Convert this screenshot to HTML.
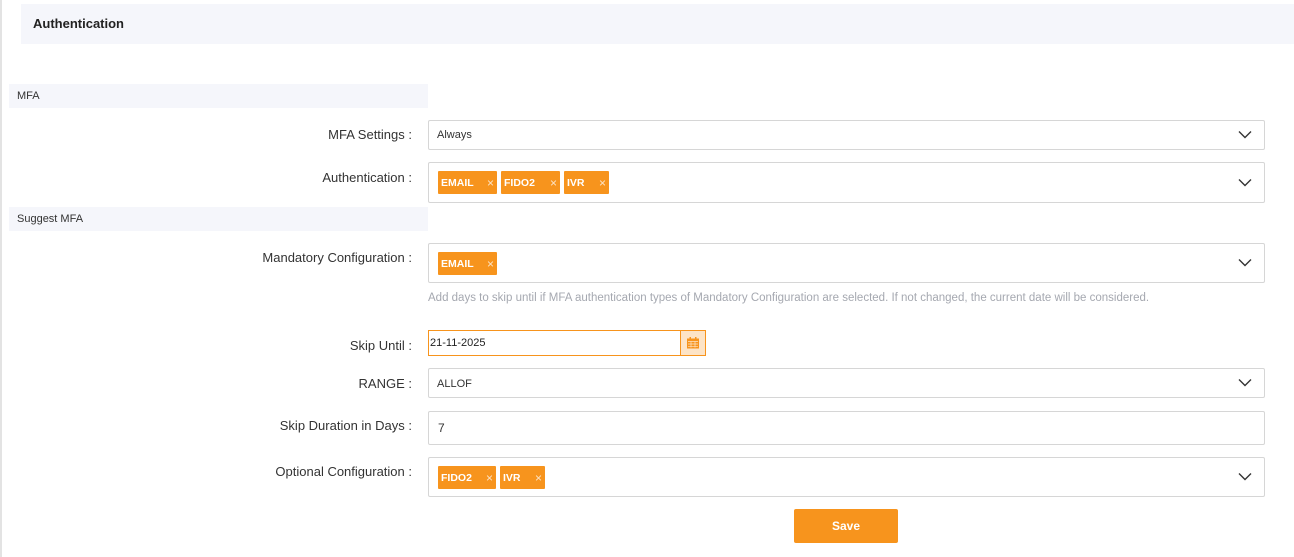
<!DOCTYPE html>
<html><head><style>
*{box-sizing:border-box;margin:0;padding:0}
body{width:1294px;height:557px;background:#fff;font-family:"Liberation Sans",Arial,sans-serif;position:relative;overflow:hidden;color:#333}
.a{position:absolute}
.lbar{left:0;top:0;width:2px;height:557px;background:#e3e3e3}
.hdr{left:21px;top:4px;width:1273px;height:40px;background:#f5f6fb;font-weight:bold;font-size:13px;color:#222;padding:12px 0 0 12px}
.sec{left:9px;width:419px;height:24px;background:#f5f6fb;font-size:11px;color:#333;padding:6px 0 0 8px}
.lbl{right:882px;font-size:13px;color:#333;text-align:right;white-space:nowrap}
.box{left:428px;width:837px;border:1px solid #d6d6d6;border-radius:2px;background:#fff;font-size:11px;color:#333}
.chev{position:absolute;right:12px;top:50%;margin-top:-5px;width:14px;height:9px}
.tag{position:absolute;top:8px;height:23px;background:#f7941d;color:#fff;font-weight:bold;font-size:10.5px;padding:6px 0 0 3px;border-radius:1px}
.tag i{position:absolute;right:3px;top:5px;font-style:normal;font-weight:normal;font-size:12px;color:#fde4c7}
</style></head><body>
<div class="a lbar"></div>
<div class="a hdr">Authentication</div>
<div class="a sec" style="top:84px">MFA</div>
<div class="a lbl" style="top:127px">MFA Settings :</div>
<div class="a box" style="top:120px;height:30px;padding:8px 0 0 8px">Always<svg class="chev" viewBox="0 0 14 9"><path d="M1 1.5L7 7.5L13 1.5" fill="none" stroke="#333" stroke-width="1.4"/></svg></div>
<div class="a lbl" style="top:170px">Authentication :</div>
<div class="a box" style="top:162px;height:41px">
<div class="tag" style="left:9px;width:59px">EMAIL<i>×</i></div>
<div class="tag" style="left:72px;width:59px">FIDO2<i>×</i></div>
<div class="tag" style="left:135px;width:45px">IVR<i>×</i></div>
<svg class="chev" viewBox="0 0 14 9"><path d="M1 1.5L7 7.5L13 1.5" fill="none" stroke="#333" stroke-width="1.4"/></svg></div>
<div class="a sec" style="top:207px">Suggest MFA</div>
<div class="a lbl" style="top:250px">Mandatory Configuration :</div>
<div class="a box" style="top:243px;height:40px">
<div class="tag" style="left:9px;width:59px">EMAIL<i>×</i></div>
<svg class="chev" viewBox="0 0 14 9"><path d="M1 1.5L7 7.5L13 1.5" fill="none" stroke="#333" stroke-width="1.4"/></svg></div>
<div class="a" style="left:428px;top:292px;font-size:11.5px;color:#a5a8b0;white-space:nowrap">Add days to skip until if MFA authentication types of Mandatory Configuration are selected. If not changed, the current date will be considered.</div>
<div class="a lbl" style="top:338px">Skip Until :</div>
<div class="a" style="left:428px;top:330px;width:278px;height:26px;border:1px solid #f7941d;font-size:11px;color:#222;padding:6px 0 0 1px">21-11-2025
<div style="position:absolute;right:0;top:0;width:25px;height:24px;background:#fde4c7;border-left:1px solid #f7941d">
<svg style="position:absolute;left:6px;top:6px" width="12" height="12" viewBox="0 0 12 12"><rect x="0" y="1.5" width="12" height="10" fill="#f7941d"/><rect x="2.5" y="0" width="1.5" height="3" fill="#f7941d"/><rect x="8" y="0" width="1.5" height="3" fill="#f7941d"/><path d="M1 4.5h10M1 7h10M1 9.3h10M4 4.5v6M8 4.5v6" stroke="#fde4c7" stroke-width=".7"/></svg></div></div>
<div class="a lbl" style="top:376px">RANGE :</div>
<div class="a box" style="top:368px;height:30px;padding:9px 0 0 8px">ALLOF<svg class="chev" viewBox="0 0 14 9"><path d="M1 1.5L7 7.5L13 1.5" fill="none" stroke="#333" stroke-width="1.4"/></svg></div>
<div class="a lbl" style="top:418px">Skip Duration in Days :</div>
<div class="a box" style="top:411px;height:34px;padding:9px 0 0 9px;font-size:12px">7</div>
<div class="a lbl" style="top:464px">Optional Configuration :</div>
<div class="a box" style="top:457px;height:40px">
<div class="tag" style="left:9px;width:58px">FIDO2<i>×</i></div>
<div class="tag" style="left:71px;width:45px">IVR<i>×</i></div>
<svg class="chev" viewBox="0 0 14 9"><path d="M1 1.5L7 7.5L13 1.5" fill="none" stroke="#333" stroke-width="1.4"/></svg></div>
<div class="a" style="left:794px;top:509px;width:104px;height:34px;background:#f7941d;border-radius:2px;color:#fff;font-weight:bold;font-size:12px;text-align:center;line-height:34px">Save</div>
</body></html>
